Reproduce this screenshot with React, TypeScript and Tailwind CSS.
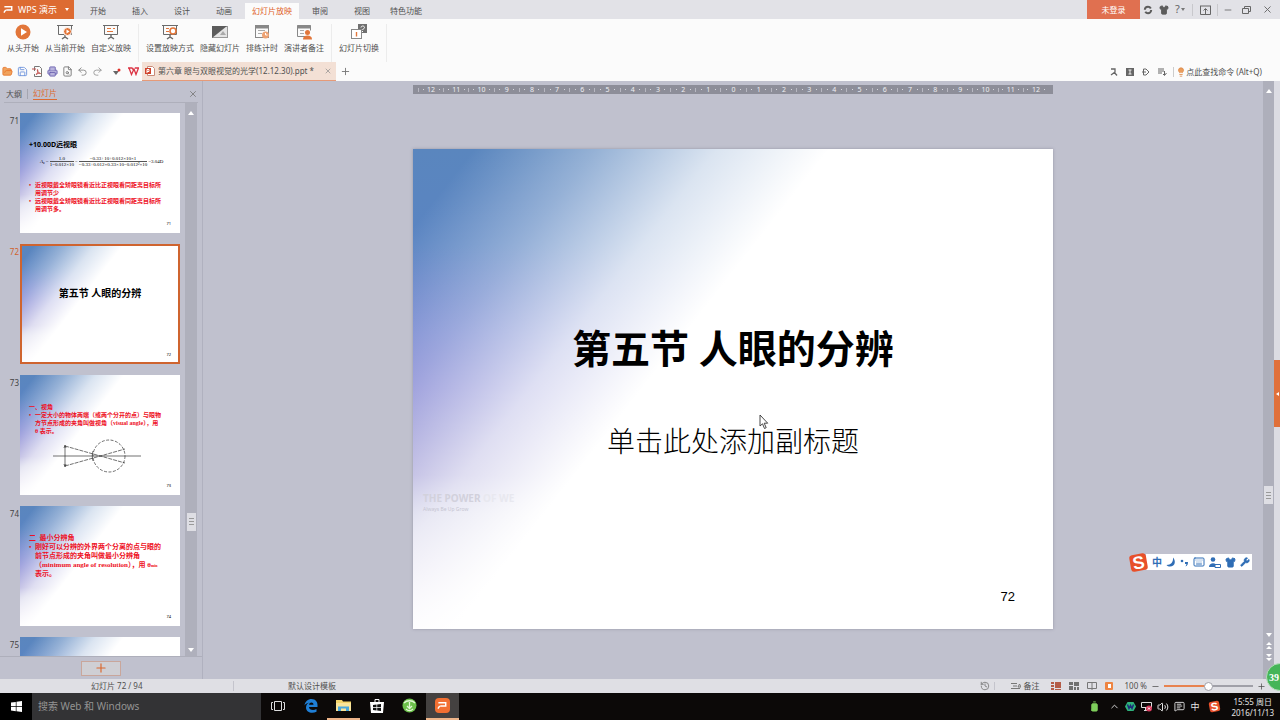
import { useState } from 'react';
import type { ReactNode } from 'react';
import {
  Battery,
  ChevronUp,
  FileSearch,
  FolderOpen,
  History,
  Keyboard,
  Lightbulb,
  MessageSquareText,
  Minus,
  Plus,
  Printer,
  Redo2,
  Save,
  Shirt,
  Undo2,
  Volume2,
  Wrench,
  X,
} from 'lucide-react';

const tabs = ['开始', '插入', '设计', '动画', '幻灯片放映', '审阅', '视图', '特色功能'];

const ruler = [...Array(25)].map((_, idx) => Math.abs(idx - 12));

const slideBg =
  'bg-[linear-gradient(128deg,rgba(255,255,255,0)_6%,rgba(255,255,255,0.36)_18%,rgba(255,255,255,0.78)_30%,#fff_41%),linear-gradient(180deg,#5a86be_0%,#5a84c2_20%,#6478ca_38%,#696dca_50%,#6e68c0_68%,#9a9ace_76%,#bdb6de_88%,#eeeaf6_100%)]';

function Board({ children }: { children?: ReactNode }) {
  return (
    <svg width="18" height="18" viewBox="0 0 18 18" fill="none" stroke="#6b6b6b">
      <path d="M1 2.5h16M2.5 3v8.5h13V3" />
      <path d="M9 12v3M6 16l3-2 3 2" strokeWidth="1.5" />
      {children}
    </svg>
  );
}

const showButtons = [
  {
    label: '从头开始',
    icon: (
      <svg width="18" height="18" viewBox="0 0 18 18">
        <circle cx="9" cy="9" r="7.5" fill="#e2763a" />
        <path d="M7 5.2v7.6L13 9z" fill="#fff" />
      </svg>
    ),
  },
  {
    label: '从当前开始',
    icon: (
      <Board>
        <circle cx="11.5" cy="8.5" r="4" fill="#e2763a" stroke="#fff" />
        <path d="M10.5 6.5v4l3-2z" fill="#fff" stroke="none" />
      </Board>
    ),
  },
  {
    label: '自定义放映',
    icon: (
      <Board>
        <path d="M5 5.5h4M11 5.5h2M5 8.5h6" stroke="#e2763a" />
      </Board>
    ),
  },
  null,
  {
    label: '设置放映方式',
    icon: (
      <Board>
        <path d="M5 5.5h3M5 8.5h3" stroke="#e2763a" />
        <circle cx="12" cy="8" r="3" fill="#fff" stroke="#e2763a" strokeWidth="1.6" />
      </Board>
    ),
  },
  {
    label: '隐藏幻灯片',
    icon: (
      <svg width="18" height="18" viewBox="0 0 18 18">
        <rect x="1.5" y="3.5" width="15" height="11" fill="#e4e4e4" stroke="#999" />
        <path d="M1 3h15L1 15z" fill="#5c5c5c" />
        <path d="M9 12l3-4 3 4z" fill="#aaa" />
      </svg>
    ),
  },
  {
    label: '排练计时',
    icon: (
      <svg width="18" height="18" viewBox="0 0 18 18" fill="none">
        <rect x="2.5" y="2.5" width="13" height="12" stroke="#888" />
        <path d="M2 4h14" stroke="#888" strokeWidth="3" />
        <path d="M5 7.5h7M5 10.5h4" stroke="#aaa" />
        <circle cx="12.5" cy="12" r="3.5" fill="#eda273" />
        <path d="M12.5 10v2h2" stroke="#fff" />
      </svg>
    ),
  },
  {
    label: '演讲者备注',
    icon: (
      <svg width="18" height="18" viewBox="0 0 18 18" fill="none">
        <path d="M10 13.5H2.5v-11h13v5" stroke="#888" />
        <path d="M2 4h14" stroke="#888" strokeWidth="3" />
        <path d="M5 7.5h4M5 10.5h4" stroke="#aaa" />
        <circle cx="12.5" cy="9.5" r="2.5" fill="#e2763a" />
        <path d="M8 16.5c0-3 2-4 4.500-4s4.500 1 4.500 4z" fill="#e2763a" />
      </svg>
    ),
  },
  null,
  {
    label: '幻灯片切换',
    icon: (
      <svg width="18" height="18" viewBox="0 0 18 18" fill="none">
        <rect x="8" y="1" width="9" height="9" fill="#707070" />
        <path d="M11 4.5c0-2 3.5-2 3.5 0 0 1.5-2 1.2-2 2.5M12.5 8v1" stroke="#fff" />
        <rect x="1.5" y="6.5" width="10" height="9" fill="#fff" stroke="#888" />
        <path d="M6.5 9v4.5" stroke="#e2763a" strokeWidth="1.4" />
      </svg>
    ),
  },
  null,
];

const quickButtons = [
  { label: '打开', icon: <FolderOpen size={11} color="#e8782f" fill="#f0a35e" /> },
  { label: '保存', icon: <Save size={11} color="#6f94dc" /> },
  {
    label: '输出为PDF',
    icon: (
      <svg width="11" height="11" viewBox="0 0 11 11" fill="none" stroke="#777">
        <path d="M2.5 5V.5h5l2 2v8h-7V8" />
        <path d="M4 8.5c2-1 2-5 1.5-5s0 3.5 3 4c-1.5-.5-3 0-4.5 1M0 3h4" stroke="#c0504d" />
      </svg>
    ),
  },
  { label: '打印', icon: <Printer size={11} color="#6b63b0" fill="#b9b4dd" /> },
  { label: '打印预览', icon: <FileSearch size={11} color="#777" /> },
  { label: '撤销', icon: <Undo2 size={11} color="#888" /> },
  { label: '恢复', icon: <Redo2 size={11} color="#999" /> },
];

function WpsMark({ size }: { size: number }) {
  return (
    <svg width={size} height={size} viewBox="0 0 12 12" fill="none" stroke="#fff" strokeWidth="1.6">
      <path d="M1.5 3h8v3.5H3.5M1 9.5L3 6.5" />
    </svg>
  );
}

function SogouMark({ size }: { size: number }) {
  return (
    <svg width={size} height={size} viewBox="0 0 20 20">
      <g transform="rotate(-10 10 10)">
        <rect x="2" y="2" width="16" height="16" rx="3" fill="#e8502a" />
        <text
          x="10"
          y="16"
          fill="#fff"
          fontFamily="Liberation Sans, sans-serif"
          fontSize="17"
          fontWeight="700"
          textAnchor="middle"
        >
          S
        </text>
      </g>
    </svg>
  );
}

function TitleBar() {
  const [active, setActive] = useState('幻灯片放映');

  return (
    <header className="flex h-[19px] shrink-0 items-stretch bg-[#e2e2e7]">
      <button className="flex w-[74px] items-center gap-1 bg-[#dd6b32] pl-[3px] text-[9px] text-white">
        <WpsMark size={11} />
        <span className="whitespace-nowrap">WPS 演示</span>
        <svg width="4" height="3" className="ml-1" viewBox="0 0 4 3">
          <path d="M0 0h4L2 3z" fill="#fff" />
        </svg>
      </button>
      <nav className="ml-[3px] flex">
        {tabs.map((tab) => (
          <button
            key={tab}
            onClick={() => setActive(tab)}
            className={
              tab === active
                ? 'mt-[3px] min-w-[42px] bg-[#fbfbfb] px-[7px] text-[#e0622a]'
                : 'mt-[3px] min-w-[42px] px-[7px]'
            }
          >
            {tab}
          </button>
        ))}
      </nav>
      <div className="ml-auto flex items-center text-[#666]">
        <button className="h-full w-[53px] bg-[#e07050] text-white">未登录</button>
        <button aria-label="同步" className="flex w-4 justify-center">
          <svg width="10" height="10" viewBox="0 0 10 10" fill="none" stroke="#5c5c5c" strokeWidth="2">
            <circle cx="5" cy="5" r="3.2" strokeDasharray="8 2" />
          </svg>
        </button>
        <button aria-label="皮肤" className="flex w-4 justify-center">
          <Shirt size={10} fill="#5c5c5c" color="#5c5c5c" />
        </button>
        <button className="flex w-4 items-center justify-center gap-px text-[11px]">
          ?
          <svg width="4" height="3" viewBox="0 0 4 3">
            <path d="M0 0h4L2 3z" fill="#777" />
          </svg>
        </button>
        <span className="ml-1 h-3 w-px bg-[#c8c8cc]" />
        <button aria-label="隐藏功能区" className="flex w-6 justify-center">
          <svg width="11" height="10" viewBox="0 0 11 10" fill="none" stroke="#666">
            <path d="M.5 1v8.5h10V1M0 1h11" />
            <path d="M5.5 9V4M3.5 5.5l2-2 2 2" />
          </svg>
        </button>
        <span className="h-3 w-px bg-[#c8c8cc]" />
        <button aria-label="最小化" className="flex w-5 justify-center">
          <Minus size={10} />
        </button>
        <button aria-label="还原" className="flex w-4 justify-center">
          <svg width="9" height="8" viewBox="0 0 9 8" fill="none" stroke="#666">
            <path d="M2.5 2V.5h6v5H7M.5 2.5h6v5h-6z" />
          </svg>
        </button>
        <button aria-label="关闭" className="flex w-[26px] justify-center">
          <X size={11} />
        </button>
      </div>
    </header>
  );
}

function Ribbon() {
  return (
    <div className="flex h-[43px] shrink-0 items-stretch gap-1.5 bg-[#fbfbfb] pl-[7px]">
      {showButtons.map((button, idx) =>
        button ? (
          <button key={idx} className="flex flex-col items-center pt-1">
            {button.icon}
            <span className="mt-0.5 leading-[10px] whitespace-nowrap">{button.label}</span>
          </button>
        ) : (
          <span key={idx} className="mx-px mt-[5px] w-px bg-[#ececec]" />
        )
      )}
    </div>
  );
}

function QuickBar() {
  return (
    <div className="flex h-[19px] shrink-0 items-center bg-[#fbfbfb]">
      {quickButtons.map(({ label, icon }) => (
        <button key={label} aria-label={label} className="flex w-[15px] justify-center">
          {icon}
        </button>
      ))}
      <button aria-label="自定义" className="ml-1 flex w-[15px] justify-center">
        <svg width="9" height="8" viewBox="0 0 9 8">
          <path d="M1 3h6L4 7z" fill="#666" />
          <circle cx="7" cy="2" r="1.5" fill="#e0322a" />
        </svg>
      </button>
      <button aria-label="WPS" className="flex w-[18px] justify-center">
        <svg width="11" height="9" viewBox="0 0 11 9" fill="none" stroke="#dc3545" strokeWidth="1.3">
          <path d="M0 1h4l2 3M1 1l2.500 6.500L6 2l2 5.500L10.500 1H7" />
        </svg>
      </button>
      <div className="flex h-full w-[194px] items-center border-b border-[#e69a78] bg-[#f3e0d5] pl-[3px]">
        <svg width="10" height="10" viewBox="0 0 10 10" fill="none">
          <path d="M2.5.5h5l2 2v7h-7z" fill="#fff" stroke="#c98a78" />
          <rect y="2" width="6" height="6" fill="#d0432c" />
          <path d="M2 7V3.500h2v2H2" stroke="#fff" />
        </svg>
        <span className="ml-[3px] whitespace-nowrap">第六章 眼与双眼视觉的光学(12.12.30).ppt *</span>
        <button aria-label="关闭文档" className="mr-1 ml-auto">
          <X size={8} color="#888" />
        </button>
      </div>
      <button aria-label="新建" className="ml-1">
        <Plus size={11} color="#777" />
      </button>
      <div className="ml-auto flex items-center pr-[18px]">
        <div className="mr-1.5 flex items-center gap-2 text-[#666]">
          <svg width="8" height="8" viewBox="0 0 8 8" fill="none" stroke="currentColor">
            <path d="M1 1h4v3L1 7M4 4l3 3.5" strokeWidth="1.3" />
          </svg>
          <svg width="8" height="8" viewBox="0 0 8 8">
            <rect width="8" height="8" fill="#666" />
            <path d="M2.5 2h3M4 2v4M2.5 6h3" stroke="#eee" />
          </svg>
          <svg width="8" height="8" viewBox="0 0 8 8" fill="none" stroke="currentColor">
            <path d="M1.5 1H4l3 3-3 3H1.5zM0 4h4" />
          </svg>
          <svg width="9" height="8" viewBox="0 0 9 8" fill="none" stroke="currentColor">
            <path d="M0 1h6M0 3h6M0 5h4M6.5 3v4M5 6l1.5 1.5L8.5 5" />
          </svg>
        </div>
        <span className="mr-0.5 h-2.5 w-px bg-[#ccc]" />
        <button className="flex items-center whitespace-nowrap">
          <Lightbulb size={10} color="#dc8a4a" fill="#eb9d5c" />
          点此查找命令 (Alt+Q)
        </button>
      </div>
    </div>
  );
}

type ThumbProps = {
  num: number;
  selected?: boolean;
  children?: ReactNode;
};

function Thumb({ num, selected, children }: ThumbProps) {
  return (
    <li className="flex">
      <span
        className={
          selected ? 'w-5 pt-0.5 pr-px text-right text-[#d0622c]' : 'w-5 pt-0.5 pr-px text-right text-[#444]'
        }
      >
        {num}
      </span>
      <div
        className={`flex h-[120px] w-40 flex-col whitespace-nowrap ${slideBg} ${
          selected ? 'outline-2 -outline-offset-2 outline-[#cf642f]' : ''
        }`}
      >
        {children}
        {children && (
          <span className="mt-auto mr-[9px] mb-1.5 text-right text-[4px] leading-[6px] text-black">{num}</span>
        )}
      </div>
    </li>
  );
}

function Bullet({ children }: { children: ReactNode }) {
  return (
    <div className="flex">
      <span className="w-1.5">•</span>
      <p>{children}</p>
    </div>
  );
}

function Fraction({ top, bottom }: { top: string; bottom: string }) {
  return (
    <span className="flex flex-col text-center">
      <span className="border-b border-[#555]">{top}</span>
      <span>{bottom}</span>
    </span>
  );
}

const redText = 'pl-[9px] font-["Liberation_Serif","Noto_Sans_CJK_SC",serif] font-bold text-[#ee1025]';

function SlidePanel() {
  return (
    <aside className="flex w-[203px] shrink-0 flex-col border-r border-[#b0b1bf]">
      <div className="mx-1 flex h-[22px] shrink-0 items-center border-b border-[#aeafbb] pt-1 pl-0.5">
        <button>大纲</button>
        <span className="mx-[5px] h-2.5 w-px bg-[#a4a5b0]" />
        <button className="border-b border-[#dd6b32] text-[#dd6b32]">幻灯片</button>
        <button aria-label="关闭窗格" className="ml-auto">
          <X size={10} color="#777" />
        </button>
      </div>
      <div className="flex min-h-0 flex-1 border-b border-[#aeafbb]">
        <ol className="flex h-0 min-h-full flex-1 flex-col gap-[11px] overflow-hidden pt-[10px]">
          <Thumb num={71}>
            <p className="mt-[28px] pl-[9px] text-[7px] leading-[8px] font-bold text-black">+10.00D远视眼</p>
            <div className='mt-[7px] flex items-center gap-px pl-5 font-["Liberation_Serif",serif] text-[5px] leading-[5px] text-black'>
              <span>
                <i>A</i>
                <sub className="text-[3px]">u</sub> =
              </span>
              <Fraction top="1.0" bottom="1−0.012×10" />
              <span>−</span>
              <Fraction top="−0.33+10+0.012×10×1" bottom="−0.33+0.012×0.33×10−0.012²×10" />
              <span>=3.04D</span>
            </div>
            <div className={`${redText} mt-[14px] text-[6px] leading-[8px]`}>
              <Bullet>
                近视眼戴全矫眼镜看近比正视眼看同距离目标所
                <br />
                用调节少
              </Bullet>
              <Bullet>
                远视眼戴全矫眼镜看近比正视眼看同距离目标所
                <br />
                用调节多。
              </Bullet>
            </div>
          </Thumb>
          <Thumb num={72} selected>
            <p className="mt-[41px] text-center text-[10px] leading-[16px] font-bold text-black">
              第五节 人眼的分辨
            </p>
          </Thumb>
          <Thumb num={73}>
            <div className={`${redText} mt-[28px] text-[6px] leading-[8px]`}>
              <p>一、视角</p>
              <Bullet>
                一定大小的物体两端（或两个分开的点）与眼物
                <br />
                方节点形成的夹角叫做视角（visual angle），用
                <br />θ 表示。
              </Bullet>
            </div>
            <svg
              className="mt-1 ml-8"
              width="90"
              height="34"
              viewBox="0 0 90 34"
              fill="none"
              stroke="#333"
              strokeWidth="0.7"
            >
              <path d="M1 17h88M13 7v20" />
              <circle cx="57" cy="17" r="16" strokeDasharray="3 1.5" />
              <path d="M13 7l60 17M13 27l60-17" strokeDasharray="4 1" />
              <path d="M41 12c-1 4-1 6 0 10M12 9l1-3 1 3M12 25l1 3 1-3" />
            </svg>
          </Thumb>
          <Thumb num={74}>
            <div className={`${redText} mt-[28px] text-[7px] leading-[9px]`}>
              <p>二&ensp;最小分辨角</p>
              <Bullet>
                刚好可以分辨的外界两个分离的点与眼的
                <br />
                前节点形成的夹角叫做最小分辨角
                <br />
                （minimum angle of resolution），用 θ<span className="text-[4px]">min</span>
                <br />
                表示。
              </Bullet>
            </div>
          </Thumb>
          <Thumb num={75} />
        </ol>
        <div className="mr-[5px] flex w-3 flex-col items-center justify-between bg-[#afb0bc] pt-2 pb-1">
          <svg width="6" height="4" viewBox="0 0 6 4">
            <path d="M0 4l3-4 3 4z" fill="#fff" />
          </svg>
          <div className="mt-[280px] flex h-[18px] w-[9px] flex-col items-center justify-center gap-0.5 bg-[#dedee4]">
            <span className="h-px w-[5px] bg-[#999]" />
            <span className="h-px w-[5px] bg-[#999]" />
            <span className="h-px w-[5px] bg-[#999]" />
          </div>
          <svg width="6" height="4" viewBox="0 0 6 4">
            <path d="M0 0l3 4 3-4z" fill="#fff" />
          </svg>
        </div>
      </div>
      <div className="flex h-[22px] shrink-0 items-center justify-center">
        <button
          aria-label="新建幻灯片"
          className="flex h-[15px] w-10 items-center justify-center border border-[#c9a69b] bg-[#cfcfd4]"
        >
          <Plus size={14} color="#d9682f" />
        </button>
      </div>
    </aside>
  );
}

function Editor() {
  return (
    <main className="flex min-w-0 flex-1 flex-col items-center pt-1">
      <div className="flex h-[9px] w-[640px] bg-[#8d8e99] px-[5px] text-[7px] leading-[9px] text-[#f0f0f4]">
        {ruler.map((mark, idx) => (
          <span key={idx} className="flex flex-1 items-center justify-between">
            <i className="h-1 w-px bg-[#b8b8c2]" />
            <i className="h-px w-px bg-[#d8d8de]" />
            {mark}
            <i className="h-px w-px bg-[#d8d8de]" />
            <i />
          </span>
        ))}
      </div>
      <section
        className={`relative mt-[55px] flex aspect-[4/3] w-[640px] flex-col text-black shadow-[0_0_3px_rgba(90,90,110,0.4)] ${slideBg}`}
      >
        <h1 className='mt-[181px] text-center font-["Liberation_Serif","Noto_Sans_CJK_SC",serif] text-[39px] leading-[40px] font-bold'>
          第五节 人眼的分辨
        </h1>
        <p className='mt-[53px] text-center font-["Liberation_Serif","Noto_Sans_CJK_SC",serif] text-[28px] leading-[40px] font-light'>
          单击此处添加副标题
        </p>
        <p className="mt-[28px] pl-[10px] text-[10px] leading-[14px] font-bold text-[#d2d1dc]">
          THE POWER <span className="text-[#e8e8ef]">OF WE</span>
        </p>
        <p className="pl-[10px] text-[5px] leading-[8px] text-[#c6c5d2]">Always Be Up Grow</p>
        <span className='mt-auto mr-[38px] mb-6 text-right font-["Liberation_Sans",sans-serif] text-[13px] leading-4'>
          72
        </span>
        <svg className="absolute top-[265px] left-[346px]" width="10" height="16" viewBox="0 0 10 16">
          <path d="M1 1v11l2.5-2.2L5.5 14.5l1.7-.8-2-4.5h3.5z" fill="#fff" stroke="#333" strokeWidth="0.9" />
        </svg>
      </section>
    </main>
  );
}

function EditorScroll() {
  return (
    <div className="flex shrink-0">
      <div className="flex w-[11px] flex-col items-center bg-[#aeafbb] pt-2 pb-4">
        <svg width="6" height="4" viewBox="0 0 6 4">
          <path d="M0 4l3-4 3 4z" fill="#fff" />
        </svg>
        <div className="grow-[393]" />
        <div className="flex h-[18px] w-[9px] flex-col items-center justify-center gap-0.5 bg-[#dedee4]">
          <span className="h-px w-[5px] bg-[#999]" />
          <span className="h-px w-[5px] bg-[#999]" />
          <span className="h-px w-[5px] bg-[#999]" />
        </div>
        <div className="grow-[127]" />
        <svg width="6" height="32" viewBox="0 0 6 32" fill="#fff">
          <path d="M0 2h6L3 6zM0 14l3-3 3 3zM0 18l3-3 3 3zM0 23h6l-3 3zM0 27h6l-3 3z" />
        </svg>
      </div>
      <div className="flex w-1.5 items-center bg-[#dcdce3]">
        <button
          aria-label="展开任务窗格"
          className="mt-[27px] flex h-[67px] w-full items-center justify-center bg-[#e0703a]"
        >
          <svg width="3" height="4" viewBox="0 0 3 4">
            <path d="M3 0v4L0 2z" fill="#fff" />
          </svg>
        </button>
      </div>
    </div>
  );
}

function InputMethodBar() {
  return (
    <div className="absolute right-7 bottom-[109px] flex h-4 w-[106px] items-center justify-between bg-white pr-0.5 pl-1.5 text-[#2f6db5]">
      <span className="absolute -left-[18px]">
        <SogouMark size={21} />
      </span>
      <span className="text-[10px] font-bold">中</span>
      <svg width="10" height="10" viewBox="0 0 10 10" fill="currentColor">
        <path d="M7 .5c3 3 2.500 9-3 9-1.500 0-2.500-.5-3.500-1.500C5 8 7.500 5 7 .5z" />
      </svg>
      <svg width="9" height="9" viewBox="0 0 9 9" fill="currentColor">
        <circle cx="2" cy="3" r="1.3" />
        <path d="M5 4h3c0 2-.5 3.5-2.5 4.5L6.5 6H5z" />
      </svg>
      <Keyboard size={12} />
      <svg width="12" height="11" viewBox="0 0 12 11" fill="currentColor">
        <circle cx="4" cy="2.5" r="2.3" />
        <path d="M0 10c0-5 8-5 8 0z" />
        <path d="M6 7.5h5.500v3H6z" fill="#fff" stroke="currentColor" />
      </svg>
      <Shirt size={11} fill="currentColor" />
      <Wrench size={10} fill="currentColor" />
    </div>
  );
}

function StatusBar() {
  const [zoom, setZoom] = useState(50);

  return (
    <footer className="flex h-[14px] shrink-0 items-center bg-[#dfdfe4]">
      <span className="w-[234px] border-r border-[#c4c4cc] pl-[91px] leading-[10px]">幻灯片 72 / 94</span>
      <span className="pl-[54px]">默认设计模板</span>
      <div className="ml-auto flex items-center pr-3.5">
        <History size={10} color="#777" />
        <span className="ml-1 h-2 w-px bg-[#c4c4cc]" />
        <button className="ml-4 flex items-center gap-[3px]">
          <svg width="10" height="8" viewBox="0 0 10 8" fill="none" stroke="#777">
            <path d="M0 1.5h6M2 4h4M0 6.5h9M7 5l1.5-3L10 5z" />
          </svg>
          备注
        </button>
        <div className="ml-[11px] flex items-center gap-2">
          <button aria-label="普通视图">
            <svg width="10" height="8" viewBox="0 0 10 8">
              <path d="M0 0h3v2H0zM0 3h3v2H0zM0 6h3v2H0zM4 0h6v6H4zM4 7h6v1H4z" fill="#b45c48" />
            </svg>
          </button>
          <button aria-label="幻灯片浏览">
            <svg width="10" height="8" viewBox="0 0 10 8">
              <path d="M0 0h4v3H0zM5 0h5v4H5zM0 4h4v4H0zM5 5h2v3H5zM8 5h2v3H8z" fill="#707070" />
            </svg>
          </button>
          <button aria-label="阅读版式">
            <svg width="10" height="8" viewBox="0 0 10 8" fill="none" stroke="#777">
              <path d="M.5.5h9v6h-9zM5 0v8" />
            </svg>
          </button>
          <button aria-label="放映">
            <svg width="8" height="8" viewBox="0 0 8 8">
              <rect width="8" height="8" rx="1" fill="#ee8442" />
              <path d="M3 2h3v4H3z" fill="#fff" />
            </svg>
          </button>
        </div>
        <label htmlFor="zoom" className="ml-3 whitespace-nowrap">
          100 %
        </label>
        <button aria-label="缩小" className="ml-1">
          <Minus size={9} />
        </button>
        <input
          id="zoom"
          type="range"
          value={zoom}
          onChange={(e) => setZoom(Number(e.target.value))}
          className="mx-1 h-[2px] w-[89px] appearance-none bg-[linear-gradient(90deg,#e8834f_50%,#a0a0a8_50%)] [&::-webkit-slider-thumb]:size-[9px] [&::-webkit-slider-thumb]:appearance-none [&::-webkit-slider-thumb]:rounded-full [&::-webkit-slider-thumb]:border [&::-webkit-slider-thumb]:border-[#a0a0a8] [&::-webkit-slider-thumb]:bg-white"
        />
        <button aria-label="放大">
          <Plus size={9} />
        </button>
      </div>
    </footer>
  );
}

const apps = [
  {
    label: '任务视图',
    icon: (
      <svg width="14" height="12" viewBox="0 0 14 12" fill="none" stroke="#ddd">
        <path d="M3.5 1.5h7v9h-7zM2 2.5H.5v7H2M12 2.5h1.5v7H12" />
      </svg>
    ),
  },
  {
    label: 'Edge',
    icon: (
      <svg width="14" height="14" viewBox="0 0 14 14" fill="#1f7fd6">
        <path d="M.5 6.5C1 2.5 4 0 7.5 0 11.5 0 13.5 3 13.5 6v2H5c0 3 4.5 4 7.5 2v2.8C8 15 2 13.5 2 8.5 2 6 3.5 4.5 5.5 3.6 3.5 4 1.5 5 .5 6.5zM5 5.7h4.500C9.5 2.8 5.5 2.8 5 5.7z" />
      </svg>
    ),
  },
  {
    label: '文件资源管理器',
    icon: (
      <svg width="15" height="13" viewBox="0 0 15 13">
        <path d="M0 1h6l1 1.5h8V12H0z" fill="#f3d46b" />
        <path d="M0 4h15v8H0z" fill="#f9e59a" />
        <path d="M2 12V7.5h11V12h-3V9.5H5V12z" fill="#4aa8dc" />
      </svg>
    ),
    open: true,
  },
  {
    label: '应用商店',
    icon: (
      <svg width="14" height="15" viewBox="0 0 14 15">
        <path d="M5 4V1.5h4V4" fill="none" stroke="#fff" />
        <path d="M0 4h14l-1 11H1z" fill="#fff" />
        <path d="M3 7l3.5-.5V9H3zM7.2 6.4L11 6v3H7.200zM3 9.800h3.5v2.600L3 12zM7.200 9.800H11V13l-3.800-.5z" fill="#111" />
      </svg>
    ),
  },
  {
    label: '浏览器',
    icon: (
      <svg width="15" height="15" viewBox="0 0 15 15" fill="none">
        <circle cx="7.5" cy="7.5" r="7" fill="#6cc04a" />
        <path d="M2 5c3-3 8-3 11 0M4 11c2 2 5 2 7 0M7.5 4v6M5 8l2.500 2.500L10 8" stroke="#e3f7d6" strokeWidth="1.3" />
      </svg>
    ),
  },
  {
    label: 'WPS 演示',
    icon: (
      <span className="flex size-[15px] items-center justify-center rounded-sm bg-[#f26f32]">
        <WpsMark size={11} />
      </span>
    ),
    open: true,
    active: true,
  },
];

function Taskbar() {
  return (
    <div className="flex h-[27px] shrink-0 items-stretch bg-[#0c0908] text-[#e4e4e4]">
      <button aria-label="开始" className="flex w-8 items-center justify-center bg-black">
        <svg width="11" height="11" viewBox="0 0 11 11" fill="#fff">
          <path d="M0 1.5L4.8.9v4.300H0zM5.500.8L11 0v5.200H5.500zM0 5.900h4.800v4.300L0 9.500zM5.500 5.900H11V11l-5.500-.7z" />
        </svg>
      </button>
      <input
        aria-label="搜索"
        placeholder="搜索 Web 和 Windows"
        className="w-[229px] bg-[#333335] px-1.5 text-[10px] placeholder:text-[#939393]"
      />
      {apps.map(({ label, icon, open, active }) => (
        <button
          key={label}
          aria-label={label}
          className={`flex w-[33px] items-center justify-center border-b-2 ${
            open ? 'border-[#eeb58a]' : 'border-transparent'
          } ${active ? 'bg-[#444140]' : ''}`}
        >
          {icon}
        </button>
      ))}
      <div className="ml-auto flex items-center pr-1.5">
        <div className="mr-2.5 flex items-center gap-[5px]">
          <Battery size={11} className="mr-1 -rotate-90" color="#7fce5c" fill="#7fce5c" />
          <ChevronUp size={11} />
          <svg width="11" height="11" viewBox="0 0 11 11" fill="none">
            <path d="M2.5 1h6L11 5.5 8.5 10h-6L0 5.5z" fill="#2fb47c" />
            <path d="M2.5 3.5l1.5 4 1.5-3 1.5 3 1.5-4" stroke="#1c2c7a" strokeWidth="1.5" />
          </svg>
          <svg width="11" height="11" viewBox="0 0 11 11" fill="none" stroke="#ddd">
            <path d="M.5 1.5h10v5h-10zM3 9.5h3M4.5 7v2" />
            <circle cx="8" cy="7.5" r="3" fill="#d83a5c" stroke="none" />
            <path d="M7 6.5l2 2M9 6.5l-2 2" stroke="#fff" />
          </svg>
          <Volume2 size={12} />
          <MessageSquareText size={11} />
          <span className="text-[9px]">中</span>
          <span className="ml-1">
            <SogouMark size={13} />
          </span>
        </div>
        <div className="text-center leading-[11px]">
          <p>15:55 周日</p>
          <p>2016/11/13</p>
        </div>
      </div>
    </div>
  );
}

function App() {
  return (
    <div className='relative flex h-screen min-h-[720px] flex-col overflow-hidden bg-[#c0c1ce] font-["Noto_Sans","Noto_Sans_CJK_SC",sans-serif] text-[8px] text-[#505050]'>
      <TitleBar />
      <Ribbon />
      <QuickBar />
      <div className="relative flex min-h-0 flex-1">
        <SlidePanel />
        <Editor />
        <EditorScroll />
        <InputMethodBar />
      </div>
      <StatusBar />
      <Taskbar />
      <div className='absolute -right-[14px] bottom-[29px] flex size-[28px] items-center rounded-full border border-[#b5dcb8] bg-[#45b558] pl-0.5 font-["Liberation_Serif",serif] text-[10px] font-bold text-white'>
        39
      </div>
    </div>
  );
}

export default App;
